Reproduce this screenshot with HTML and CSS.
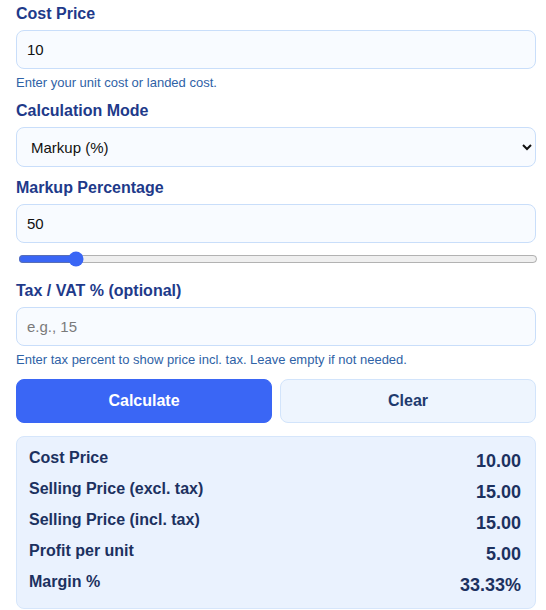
FILE: index.html
```html
<!DOCTYPE html>
<html lang="en">
<head>
  <meta charset="UTF-8">
  <meta name="viewport" content="width=device-width, initial-scale=1.0">
  <title>Markup &amp; Margin Calculator</title>
  <link rel="stylesheet" href="styles.css">
</head>
<body>
  <div class="calculator">
    <div class="field">
      <label class="field-label" for="cost-price">Cost Price</label>
      <input class="field-input" id="cost-price" type="number" value="10">
      <p class="field-help">Enter your unit cost or landed cost.</p>
    </div>

    <div class="field">
      <label class="field-label" for="calc-mode">Calculation Mode</label>
      <select class="field-input field-select" id="calc-mode">
        <option value="markup" selected>Markup (%)</option>
        <option value="margin">Margin (%)</option>
        <option value="price">Selling Price</option>
      </select>
    </div>

    <div class="field">
      <label class="field-label" for="markup-pct">Markup Percentage</label>
      <input class="field-input" id="markup-pct" type="number" value="50">
      <input class="field-range" id="markup-range" type="range" min="0" max="500" value="50">
    </div>

    <div class="field">
      <label class="field-label" for="tax-pct">Tax / VAT % (optional)</label>
      <input class="field-input" id="tax-pct" type="number" placeholder="e.g., 15">
      <p class="field-help">Enter tax percent to show price incl. tax. Leave empty if not needed.</p>
    </div>

    <div class="buttons">
      <button class="btn btn-primary" id="calculate">Calculate</button>
      <button class="btn btn-secondary" id="clear">Clear</button>
    </div>

    <div class="results" id="results">
      <div class="result-row">
        <span class="result-label">Cost Price</span>
        <span class="result-value">10.00</span>
      </div>
      <div class="result-row">
        <span class="result-label">Selling Price (excl. tax)</span>
        <span class="result-value">15.00</span>
      </div>
      <div class="result-row">
        <span class="result-label">Selling Price (incl. tax)</span>
        <span class="result-value">15.00</span>
      </div>
      <div class="result-row">
        <span class="result-label">Profit per unit</span>
        <span class="result-value">5.00</span>
      </div>
      <div class="result-row">
        <span class="result-label">Margin %</span>
        <span class="result-value">33.33%</span>
      </div>
    </div>
  </div>
</body>
</html>
```

FILE: styles.css
```css
* {
  margin: 0;
  padding: 0;
  box-sizing: border-box;
}

body {
  font-family: "Liberation Sans", Arial, sans-serif;
  background: #ffffff;
  color: #1e3a8a;
}

.calculator {
  width: 520px;
  margin-left: 16px;
  padding-top: 5px;
}

.field {
  margin-bottom: 12px;
}

.field-label {
  display: block;
  font-size: 16px;
  font-weight: 700;
  color: #1e3a8a;
  margin-bottom: 7px;
}

.field-input {
  display: block;
  width: 100%;
  padding: 10px 10px;
  font-family: inherit;
  font-size: 15px;
  color: #111111;
  background: #f8fbff;
  border: 1px solid #c9defa;
  border-radius: 8px;
  outline: none;
}

.field-input::placeholder {
  color: #7a7a7a;
}

.field-select {
  height: 40px;
}

.field-help {
  margin-top: 6px;
  font-size: 13px;
  color: #2f62a6;
}

.field-range {
  display: block;
  width: 100%;
  height: 16px;
  margin: 8px 2px 15px;
  accent-color: #3a66f5;
}

.buttons {
  display: grid;
  grid-template-columns: 1fr 1fr;
  gap: 8px;
  margin-bottom: 13px;
}

.btn {
  padding: 12px 16px;
  font-family: inherit;
  font-size: 16px;
  font-weight: 700;
  border-radius: 8px;
  cursor: pointer;
}

.btn-primary {
  background: #3a66f5;
  border: 1px solid #3a66f5;
  color: #ffffff;
}

.btn-secondary {
  background: #eef5fe;
  border: 1px solid #d2e4fb;
  color: #1e3a6e;
}

.results {
  display: flex;
  flex-direction: column;
  gap: 7px;
  padding: 12px 14px 11px 12px;
  background: #eaf2fe;
  border: 1px solid #d6e6fb;
  border-radius: 8px;
  color: #1c3160;
}

.result-row {
  display: flex;
  justify-content: space-between;
  align-items: flex-start;
  min-height: 24px;
}

.result-label {
  font-size: 16px;
  font-weight: 700;
}

.result-value {
  margin-top: 2px;
  font-size: 18px;
  font-weight: 700;
}
```
